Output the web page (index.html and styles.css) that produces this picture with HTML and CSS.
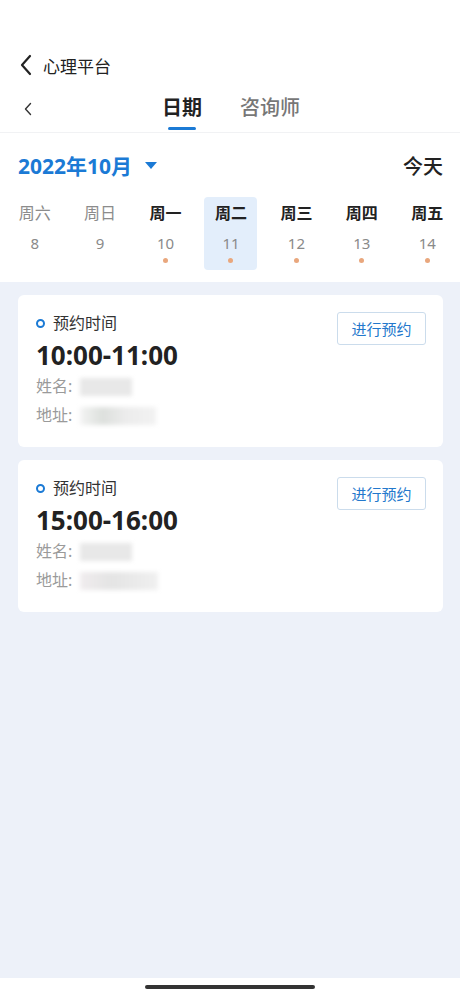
FILE: index.html
```html
<!DOCTYPE html>
<html lang="zh-CN">
<head>
    <meta charset="UTF-8">
    <meta name="viewport" content="width=device-width, initial-scale=1.0">
    <title>心理平台</title>
    <link rel="stylesheet" href="styles.css">
</head>
<body>
    <div class="status"></div>
    <div class="appbar">
        <svg class="back" width="14" height="22" viewBox="0 0 14 22"><path d="M11 2 L3 11 L11 20" fill="none" stroke="#222" stroke-width="2.2" stroke-linecap="round" stroke-linejoin="round"/></svg>
        <span class="appbar-title">心理平台</span>
    </div>
    <div class="nav">
        <div class="nav-left">
            <svg width="10" height="16" viewBox="0 0 10 16"><path d="M7.5 2.5 L2.5 8 L7.5 13.5" fill="none" stroke="#333" stroke-width="1.4" stroke-linecap="round" stroke-linejoin="round"/></svg>
        </div>
        <div class="tabs">
            <div class="tab active">日期</div>
            <div class="tab">咨询师</div>
        </div>
        <div></div>
    </div>
    <div class="month-row">
        <div class="month">2022年10月 <span class="caret"></span></div>
        <div class="today">今天</div>
    </div>
    <div class="week">
        <div class="day past"><span class="wd">周六</span><span class="num">8</span><span class="dot none"></span></div>
        <div class="day past"><span class="wd">周日</span><span class="num">9</span><span class="dot none"></span></div>
        <div class="day"><span class="wd">周一</span><span class="num">10</span><span class="dot"></span></div>
        <div class="day selected"><span class="wd">周二</span><span class="num">11</span><span class="dot"></span></div>
        <div class="day"><span class="wd">周三</span><span class="num">12</span><span class="dot"></span></div>
        <div class="day"><span class="wd">周四</span><span class="num">13</span><span class="dot"></span></div>
        <div class="day"><span class="wd">周五</span><span class="num">14</span><span class="dot"></span></div>
    </div>
    <div class="content">
        <div class="card">
            <div class="info">
                <div class="label"><span class="ring"></span>预约时间</div>
                <div class="time">10:00-11:00</div>
                <div class="field">姓名:<span class="blur b1"></span></div>
                <div class="field">地址:<span class="blur b2"></span></div>
            </div>
            <button class="btn">进行预约</button>
        </div>
        <div class="card">
            <div class="info">
                <div class="label"><span class="ring"></span>预约时间</div>
                <div class="time">15:00-16:00</div>
                <div class="field">姓名:<span class="blur b1"></span></div>
                <div class="field">地址:<span class="blur b3"></span></div>
            </div>
            <button class="btn">进行预约</button>
        </div>
    </div>
    <div class="home"><span class="home-bar"></span></div>
</body>
</html>
```
FILE: styles.css
```css
body {
    margin: 0;
    height: 998px;
    display: flex;
    flex-direction: column;
    background: #ffffff;
    font-family: "Noto Sans", "Noto Sans CJK SC", sans-serif;
    color: #222;
}
.status {
    height: 45px;
}
.appbar {
    height: 40px;
    display: flex;
    align-items: center;
    padding-left: 19px;
}
.back {
    margin-right: 10px;
}
.appbar-title {
    font-size: 17px;
    color: #222;
}
.nav {
    height: 47px;
    border-bottom: 1px solid #f1f2f4;
    display: grid;
    grid-template-columns: 1fr auto 1fr;
    align-items: start;
}
.nav-left {
    padding: 15px 0 0 23px;
}
.tabs {
    display: flex;
    gap: 38px;
    padding-left: 2px;
}
.tab {
    font-size: 20px;
    line-height: 28px;
    padding-top: 9px;
    color: #777;
    font-weight: 500;
    position: relative;
    height: 36px;
}
.tab.active {
    color: #222;
    font-weight: 700;
}
.tab.active::after {
    content: "";
    position: absolute;
    left: 6px;
    right: 6px;
    bottom: 0;
    height: 3px;
    border-radius: 2px;
    background: #1b7ad5;
}
.month-row {
    height: 64px;
    display: flex;
    align-items: center;
    justify-content: space-between;
    padding: 0 17px 0 18px;
}
.month {
    font-size: 21px;
    font-weight: 700;
    color: #1b7ad5;
    display: flex;
    align-items: center;
}
.caret {
    width: 0;
    height: 0;
    border-left: 6px solid transparent;
    border-right: 6px solid transparent;
    border-top: 7px solid #1b7ad5;
    margin-left: 13px;
}
.today {
    font-size: 20px;
    font-weight: 500;
    color: #222;
}
.week {
    display: grid;
    grid-template-columns: repeat(7, 1fr);
    padding: 0 0 12px 2px;
}
.day {
    justify-self: center;
    width: 53px;
    height: 73px;
    border-radius: 4px;
    display: flex;
    flex-direction: column;
    align-items: center;
}
.day.selected {
    background: #e3eefb;
}
.wd {
    font-size: 16px;
    line-height: 20px;
    margin-top: 6px;
    font-weight: 700;
    color: #222;
}
.past .wd {
    font-weight: 400;
    color: #8c8c8c;
}
.num {
    font-size: 15px;
    line-height: 20px;
    margin-top: 10px;
    color: #8a8a8a;
}
.dot {
    width: 5px;
    height: 5px;
    border-radius: 50%;
    background: #e9a77d;
    margin-top: 5px;
}
.dot.none {
    background: transparent;
}
.content {
    flex: 1;
    background: #edf1f9;
    padding: 13px 17px 0 18px;
    display: flex;
    flex-direction: column;
    gap: 13px;
}
.card {
    background: #ffffff;
    border-radius: 6px;
    padding: 17px 17px 17px 18px;
    display: flex;
    justify-content: space-between;
    align-items: flex-start;
}
.label {
    display: flex;
    align-items: center;
    font-size: 16px;
    line-height: 22px;
    color: #333;
}
.ring {
    width: 5px;
    height: 5px;
    border: 2px solid #1b7ad5;
    border-radius: 50%;
    margin-right: 8px;
}
.time {
    font-size: 26px;
    font-weight: 700;
    line-height: 34px;
    margin-top: 4px;
    color: #222;
}
.field {
    font-size: 16px;
    line-height: 29px;
    color: #9a9a9a;
    display: flex;
    align-items: center;
}
.blur {
    display: inline-block;
    height: 18px;
    margin-left: 8px;
    background: #e8e8e8;
    filter: blur(2px);
}
.b1 {
    width: 52px;
}
.b2 {
    width: 76px;
    background: linear-gradient(90deg, #f4f4f4, #dde0dd 30%, #ececec 60%, #f2f2f2);
}
.b3 {
    width: 78px;
    background: linear-gradient(90deg, #f0ecee, #e4e4e4 40%, #f0f0f0);
}
.btn {
    width: 89px;
    height: 33px;
    background: #ffffff;
    border: 1px solid #cbdcec;
    border-radius: 3px;
    color: #2378cc;
    font-family: inherit;
    font-size: 15px;
    padding: 0;
}
.home {
    height: 20px;
    display: flex;
    justify-content: center;
    padding-top: 7px;
    box-sizing: border-box;
}
.home-bar {
    width: 170px;
    height: 4px;
    border-radius: 2px;
    background: #333;
}
```
